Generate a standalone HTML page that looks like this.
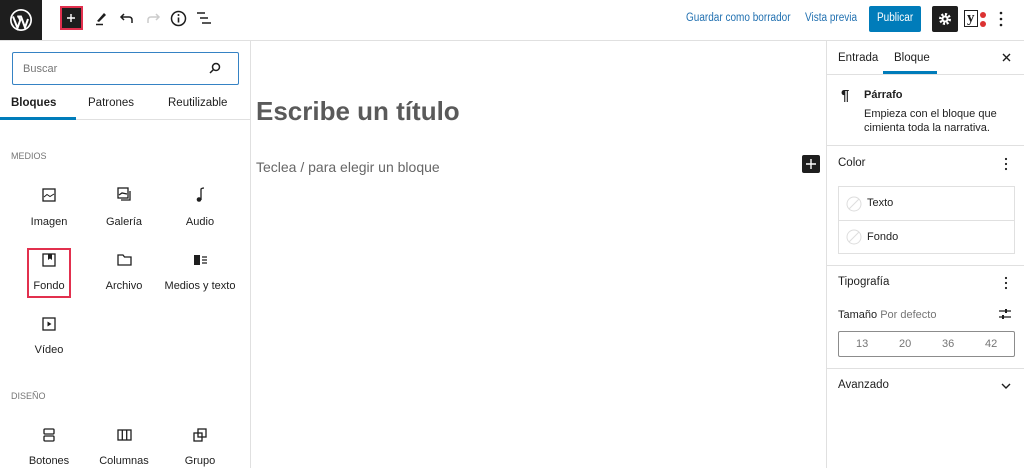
<!DOCTYPE html>
<html><head><meta charset="utf-8"><style>
*{box-sizing:border-box;margin:0;padding:0}
body{width:1024px;height:468px;overflow:hidden;background:#fff;font-family:"Liberation Sans",sans-serif;color:#1e1e1e;position:relative;font-size:13px}
.a{position:absolute}
.t{position:absolute;white-space:nowrap}
.hl{position:absolute;height:1px;background:#e0e0e0}
.vl{position:absolute;width:1px;background:#e0e0e0}
.lbl{position:absolute;width:76px;text-align:center;font-size:11px;color:#1e1e1e}
svg{position:absolute}
.sx{transform:scaleX(0.87);transform-origin:left center}
</style></head><body>
<!-- top bar -->
<div class="a" style="left:0;top:0;width:42px;height:40px;background:#1e1e1e"></div>
<svg style="left:9px;top:8px" width="24" height="24" viewBox="0 0 24 24"><circle cx="12" cy="12" r="11" fill="#fff"/><circle cx="12" cy="12" r="9.3" fill="#1e1e1e"/><path d="M4 8.5 L8.5 20 L11.2 12.3 L9.6 8.5 M8.2 8.5h4.5 M12 8.5 L16 19.5 L19 11" stroke="#fff" stroke-width="2" fill="none"/></svg>
<div class="a" style="left:60px;top:6px;width:23px;height:24px;background:#1e1e1e;border:2px solid #e2304e"></div>
<svg style="left:66px;top:13px" width="10" height="10" viewBox="0 0 10 10"><path d="M5 1v8M1 5h8" stroke="#fff" stroke-width="1.4"/></svg>
<svg style="left:93px;top:10px" width="16" height="16" viewBox="0 0 16 16"><path d="M4 11 L11 3 L13 5 L6 12 Z" fill="#1e1e1e"/><path d="M3 14.5h7" stroke="#1e1e1e" stroke-width="1.5"/></svg>
<svg style="left:119px;top:10px" width="16" height="16" viewBox="0 0 16 16"><path d="M5 4 L2 7 L5 10 M2 7 H10 Q13 7 13 10 V13" stroke="#1e1e1e" stroke-width="1.5" fill="none"/></svg>
<svg style="left:145px;top:10px" width="16" height="16" viewBox="0 0 16 16"><path d="M11 4 L14 7 L11 10 M14 7 H6 Q3 7 3 10 V13" stroke="#ccc" stroke-width="1.5" fill="none"/></svg>
<svg style="left:170px;top:10px" width="17" height="17" viewBox="0 0 17 17"><circle cx="8.5" cy="8.5" r="7" stroke="#1e1e1e" stroke-width="1.5" fill="none"/><path d="M8.5 7.5v5" stroke="#1e1e1e" stroke-width="1.6"/><circle cx="8.5" cy="5" r="1" fill="#1e1e1e"/></svg>
<svg style="left:196px;top:11px" width="16" height="14" viewBox="0 0 16 14"><path d="M1 2h8 M4 7h8 M6 12h9" stroke="#1e1e1e" stroke-width="1.5"/></svg>
<div class="t sx" style="left:686px;top:12px;color:#2271b1;font-size:11.5px">Guardar como borrador</div>
<div class="t sx" style="left:805px;top:12px;color:#2271b1;font-size:11.5px">Vista previa</div>
<div class="a" style="left:869px;top:6px;width:52px;height:26px;background:#007cba;border-radius:2px"></div>
<div class="t sx" style="left:877px;top:12px;color:#fff;font-size:11.5px">Publicar</div>
<div class="a" style="left:932px;top:6px;width:26px;height:26px;background:#1e1e1e;border-radius:2px"></div>
<svg style="left:938px;top:12px" width="14" height="14" viewBox="0 0 14 14"><circle cx="7" cy="7" r="4.5" fill="none" stroke="#fff" stroke-width="3" stroke-dasharray="2 1.5"/><circle cx="7" cy="7" r="3.5" fill="#fff"/><circle cx="7" cy="7" r="1.5" fill="#1e1e1e"/></svg>
<div class="t" style="left:964px;top:10px;font-size:15px;font-family:'Liberation Serif',serif;font-weight:bold;border:1px solid #1e1e1e;padding:0 2px;line-height:15px">y</div>
<div class="a" style="left:980px;top:12px;width:6px;height:6px;border-radius:50%;background:#dc3232"></div>
<div class="a" style="left:980px;top:21px;width:6px;height:6px;border-radius:50%;background:#dc3232"></div>
<svg style="left:999px;top:11px" width="4" height="16" viewBox="0 0 4 16"><circle cx="2" cy="2" r="1.3" fill="#1e1e1e"/><circle cx="2" cy="8" r="1.3" fill="#1e1e1e"/><circle cx="2" cy="14" r="1.3" fill="#1e1e1e"/></svg>
<div class="hl" style="left:0;top:40px;width:1024px"></div>
<!-- left sidebar -->
<div class="vl" style="left:250px;top:40px;height:428px"></div>
<div class="a" style="left:12px;top:52px;width:227px;height:33px;border:1.5px solid #3582c4;border-radius:2px"></div>
<div class="t" style="left:23px;top:63px;color:#757575;font-size:11px">Buscar</div>
<svg style="left:209px;top:62px" width="12" height="12" viewBox="0 0 12 12"><circle cx="7" cy="5" r="3.5" stroke="#1e1e1e" stroke-width="1.5" fill="none"/><path d="M4.5 7.5 L1 11" stroke="#1e1e1e" stroke-width="1.5"/></svg>
<div class="t" style="left:11px;top:97px;font-size:11.5px;font-weight:bold">Bloques</div>
<div class="t" style="left:88px;top:97px;font-size:11.5px">Patrones</div>
<div class="t" style="left:168px;top:97px;font-size:11.5px">Reutilizable</div>
<div class="hl" style="left:0;top:119px;width:250px"></div>
<div class="a" style="left:0;top:117px;width:76px;height:3px;background:#007cba"></div>
<div class="t" style="left:11px;top:151px;font-size:9px;color:#757575">MEDIOS</div>
<svg style="left:42px;top:188px" width="14" height="14" viewBox="0 0 14 14"><rect x="1" y="1" width="12" height="12" stroke="#1e1e1e" stroke-width="1.3" fill="none"/><path d="M2 9 L5 6.5 L8 8.5 L12 6" stroke="#1e1e1e" fill="none"/></svg>
<svg style="left:117px;top:187px" width="15" height="15" viewBox="0 0 15 15"><rect x="1" y="1" width="10" height="10" stroke="#1e1e1e" stroke-width="1.3" fill="none"/><path d="M2 8 L5 6 L10 7 M13 4v9H4" stroke="#1e1e1e" stroke-width="1.3" fill="none"/></svg>
<svg style="left:194px;top:187px" width="12" height="15" viewBox="0 0 12 15"><path d="M7 13V2 Q8 1 10 1" stroke="#1e1e1e" stroke-width="1.3" fill="none"/><circle cx="5" cy="12.5" r="2.3" fill="#1e1e1e"/></svg>
<div class="lbl" style="left:11px;top:216px">Imagen</div>
<div class="lbl" style="left:86px;top:216px">Galería</div>
<div class="lbl" style="left:162px;top:216px">Audio</div>
<div class="a" style="left:27px;top:248px;width:44px;height:50px;border:2px solid #e2304e"></div>
<svg style="left:42px;top:253px" width="14" height="14" viewBox="0 0 14 14"><rect x="1" y="1" width="12" height="12" stroke="#1e1e1e" stroke-width="1.3" fill="none"/><path d="M6 1h4v6L8 5.5 6 7Z" fill="#1e1e1e"/></svg>
<svg style="left:117px;top:253px" width="15" height="14" viewBox="0 0 15 14"><path d="M1 2h5l1.5 2H14v8H1Z" stroke="#1e1e1e" stroke-width="1.3" fill="none"/></svg>
<svg style="left:193px;top:254px" width="16" height="12" viewBox="0 0 16 12"><rect x="1" y="1" width="6" height="10" fill="#1e1e1e"/><path d="M9 3h5M9 6h5M9 9h5" stroke="#1e1e1e" stroke-width="1.2"/></svg>
<div class="lbl" style="left:11px;top:280px">Fondo</div>
<div class="lbl" style="left:86px;top:280px">Archivo</div>
<div class="lbl" style="left:162px;top:280px;width:76px">Medios y texto</div>
<svg style="left:42px;top:317px" width="14" height="14" viewBox="0 0 14 14"><rect x="1" y="1" width="12" height="12" stroke="#1e1e1e" stroke-width="1.3" fill="none"/><path d="M5.5 4.5v5l4-2.5Z" fill="#1e1e1e"/></svg>
<div class="lbl" style="left:11px;top:344px">Vídeo</div>
<div class="t" style="left:11px;top:391px;font-size:9px;color:#757575">DISEÑO</div>
<svg style="left:42px;top:428px" width="14" height="14" viewBox="0 0 14 14"><rect x="2" y="1" width="10" height="5" rx="1" stroke="#1e1e1e" stroke-width="1.3" fill="none"/><rect x="2" y="8" width="10" height="5" rx="1" stroke="#1e1e1e" stroke-width="1.3" fill="none"/></svg>
<svg style="left:117px;top:429px" width="15" height="12" viewBox="0 0 15 12"><rect x="1" y="1" width="13" height="10" stroke="#1e1e1e" stroke-width="1.3" fill="none"/><path d="M5.3 1v10M9.7 1v10" stroke="#1e1e1e" stroke-width="1.3"/></svg>
<svg style="left:193px;top:428px" width="14" height="14" viewBox="0 0 14 14"><rect x="1" y="5" width="8" height="8" stroke="#1e1e1e" stroke-width="1.3" fill="none"/><rect x="5" y="1" width="8" height="8" stroke="#1e1e1e" stroke-width="1.3" fill="none"/></svg>
<div class="lbl" style="left:11px;top:455px">Botones</div>
<div class="lbl" style="left:86px;top:455px">Columnas</div>
<div class="lbl" style="left:162px;top:455px">Grupo</div>
<!-- editor -->
<div class="t" style="left:256px;top:96px;font-size:26px;font-weight:bold;color:#5a5a5a">Escribe un título</div>
<div class="t" style="left:256px;top:159px;font-size:14px;color:#666">Teclea / para elegir un bloque</div>
<div class="a" style="left:802px;top:155px;width:18px;height:18px;background:#1e1e1e;border-radius:2px"></div>
<svg style="left:805px;top:158px" width="12" height="12" viewBox="0 0 12 12"><path d="M6 1v10M1 6h10" stroke="#fff" stroke-width="1.4"/></svg>
<!-- right sidebar -->
<div class="vl" style="left:826px;top:40px;height:428px"></div>
<div class="t" style="left:838px;top:52px;font-size:11.5px">Entrada</div>
<div class="t" style="left:894px;top:52px;font-size:11.5px">Bloque</div>
<div class="hl" style="left:827px;top:74px;width:197px"></div>
<div class="a" style="left:883px;top:71px;width:54px;height:3px;background:#007cba"></div>
<svg style="left:1002px;top:53px" width="9" height="9" viewBox="0 0 9 9"><path d="M1 1l7 7M8 1l-7 7" stroke="#1e1e1e" stroke-width="1.4"/></svg>
<div class="t" style="left:841px;top:87px;font-size:15px;font-weight:bold">¶</div>
<div class="t" style="left:864px;top:89px;font-size:11px;font-weight:bold">Párrafo</div>
<div class="t" style="left:864px;top:107px;font-size:11px;line-height:14px">Empieza con el bloque que<br>cimienta toda la narrativa.</div>
<div class="hl" style="left:827px;top:145px;width:197px"></div>
<div class="t" style="left:838px;top:157px;font-size:11.5px">Color</div>
<svg style="left:1004px;top:157px" width="4" height="14" viewBox="0 0 4 14"><circle cx="2" cy="2" r="1.1" fill="#1e1e1e"/><circle cx="2" cy="7" r="1.1" fill="#1e1e1e"/><circle cx="2" cy="12" r="1.1" fill="#1e1e1e"/></svg>
<div class="a" style="left:838px;top:186px;width:177px;height:68px;border:1px solid #e0e0e0"></div>
<div class="hl" style="left:838px;top:220px;width:177px"></div>
<svg style="left:846px;top:196px" width="16" height="16" viewBox="0 0 16 16"><circle cx="8" cy="8" r="7" stroke="#ddd" fill="none"/><path d="M3 13 L13 3" stroke="#ddd"/></svg>
<svg style="left:846px;top:229px" width="16" height="16" viewBox="0 0 16 16"><circle cx="8" cy="8" r="7" stroke="#ddd" fill="none"/><path d="M3 13 L13 3" stroke="#ddd"/></svg>
<div class="t" style="left:867px;top:197px;font-size:11px">Texto</div>
<div class="t" style="left:867px;top:231px;font-size:11px">Fondo</div>
<div class="hl" style="left:827px;top:265px;width:197px"></div>
<div class="t" style="left:838px;top:276px;font-size:11.5px">Tipografía</div>
<svg style="left:1004px;top:276px" width="4" height="14" viewBox="0 0 4 14"><circle cx="2" cy="2" r="1.1" fill="#1e1e1e"/><circle cx="2" cy="7" r="1.1" fill="#1e1e1e"/><circle cx="2" cy="12" r="1.1" fill="#1e1e1e"/></svg>
<div class="t" style="left:838px;top:309px;font-size:11px">Tamaño <span style="color:#757575">Por defecto</span></div>
<svg style="left:998px;top:307px" width="14" height="14" viewBox="0 0 14 14"><path d="M1 4h12M1 10h12" stroke="#1e1e1e" stroke-width="1.3"/><path d="M8 2v4M5 8v4" stroke="#1e1e1e" stroke-width="2"/></svg>
<div class="a" style="left:838px;top:331px;width:177px;height:26px;border:1px solid #8c8c8c;border-radius:2px"></div>
<div class="t" style="left:856px;top:338px;font-size:11px;color:#757575">13</div>
<div class="t" style="left:899px;top:338px;font-size:11px;color:#757575">20</div>
<div class="t" style="left:942px;top:338px;font-size:11px;color:#757575">36</div>
<div class="t" style="left:985px;top:338px;font-size:11px;color:#757575">42</div>
<div class="hl" style="left:827px;top:368px;width:197px"></div>
<div class="t" style="left:838px;top:379px;font-size:11.5px">Avanzado</div>
<svg style="left:1000px;top:381px" width="12" height="10" viewBox="0 0 12 10"><path d="M2 3 L6 7 L10 3" stroke="#1e1e1e" stroke-width="1.4" fill="none"/></svg>
</body></html>
